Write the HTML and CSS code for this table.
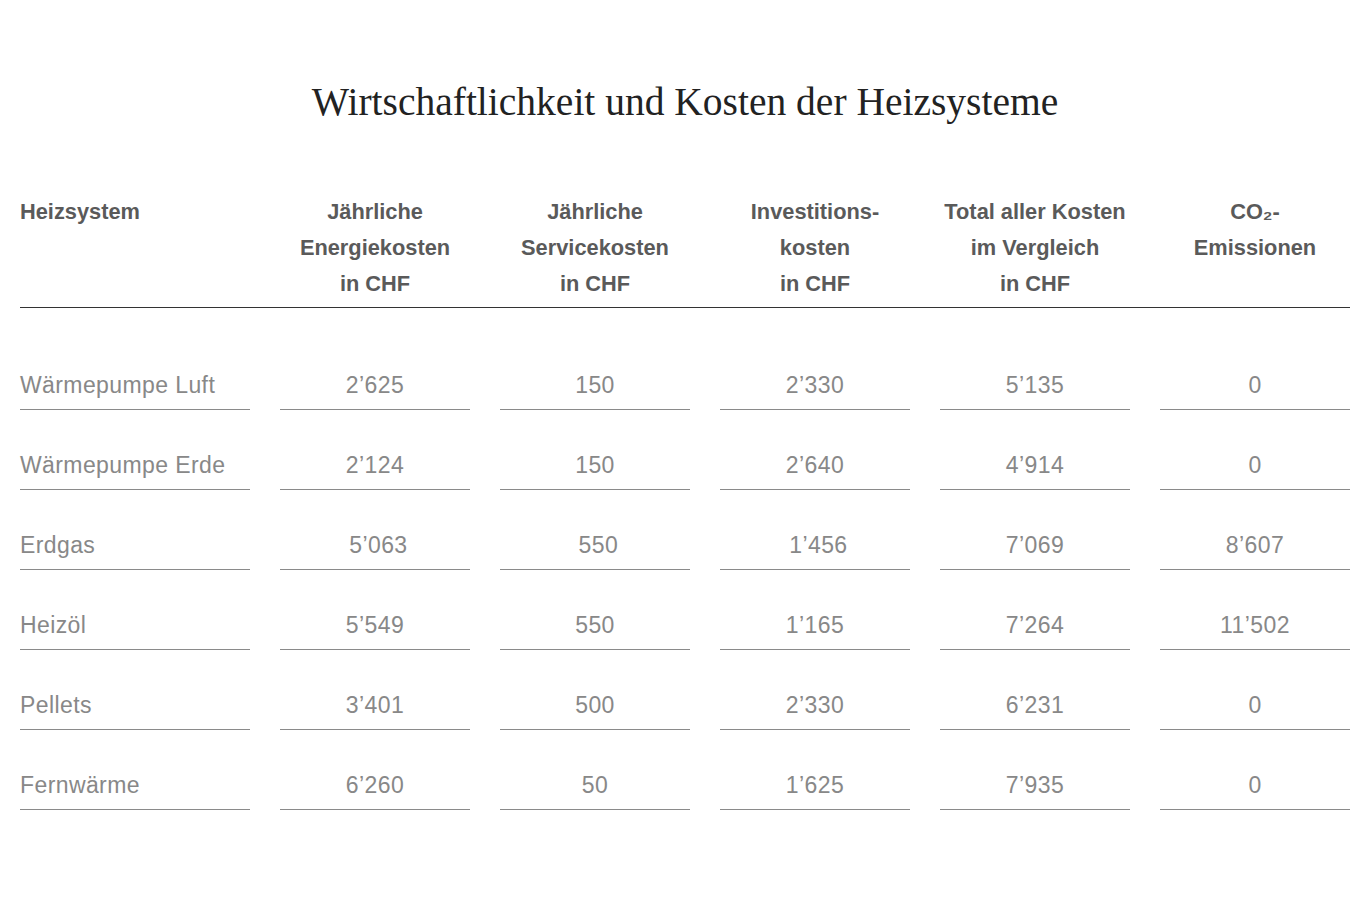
FILE: index.html
```html
<!DOCTYPE html>
<html lang="de">
<head>
<meta charset="utf-8">
<title>Wirtschaftlichkeit und Kosten der Heizsysteme</title>
<link rel="stylesheet" href="styles.css">
</head>
<body>
<main class="page">
  <h1 class="title">Wirtschaftlichkeit und Kosten der Heizsysteme</h1>
  <div class="table">
    <div class="row head">
      <div class="cell first">Heizsystem</div>
      <div class="cell">Jährliche<br>Energiekosten<br>in&nbsp;CHF</div>
      <div class="cell">Jährliche<br>Servicekosten<br>in&nbsp;CHF</div>
      <div class="cell">Investitions-<br>kosten<br>in&nbsp;CHF</div>
      <div class="cell">Total aller Kosten<br>im Vergleich<br>in&nbsp;CHF</div>
      <div class="cell">CO₂-<br>Emissionen</div>
    </div>
    <div class="body">
      <div class="row">
        <div class="cell first">Wärmepumpe Luft</div>
        <div class="cell">2’625</div><div class="cell">150</div><div class="cell">2’330</div><div class="cell">5’135</div><div class="cell">0</div>
      </div>
      <div class="row">
        <div class="cell first">Wärmepumpe Erde</div>
        <div class="cell">2’124</div><div class="cell">150</div><div class="cell">2’640</div><div class="cell">4’914</div><div class="cell">0</div>
      </div>
      <div class="row">
        <div class="cell first">Erdgas</div>
        <div class="cell">&nbsp;5’063</div><div class="cell">&nbsp;550</div><div class="cell">&nbsp;1’456</div><div class="cell">7’069</div><div class="cell">8’607</div>
      </div>
      <div class="row">
        <div class="cell first">Heizöl</div>
        <div class="cell">5’549</div><div class="cell">550</div><div class="cell">1’165</div><div class="cell">7’264</div><div class="cell">11’502</div>
      </div>
      <div class="row">
        <div class="cell first">Pellets</div>
        <div class="cell">3’401</div><div class="cell">500</div><div class="cell">2’330</div><div class="cell">6’231</div><div class="cell">0</div>
      </div>
      <div class="row">
        <div class="cell first">Fernwärme</div>
        <div class="cell">6’260</div><div class="cell">50</div><div class="cell">1’625</div><div class="cell">7’935</div><div class="cell">0</div>
      </div>
    </div>
  </div>
</main>
</body>
</html>
```
FILE: styles.css
```css
* { box-sizing: border-box; }
html, body { margin: 0; padding: 0; background: #fff; }
body { font-family: "Liberation Sans", Arial, sans-serif; }
.page { padding: 78px 20px 0 20px; }
.title {
  margin: 0 0 67px 0;
  text-align: center;
  font-family: "Liberation Serif", "Times New Roman", serif;
  font-weight: 400;
  font-size: 39.5px;
  line-height: 48px;
  color: #222;
}
.table { width: 1330px; }
.row {
  display: grid;
  grid-template-columns: 230px repeat(5, 190px);
  column-gap: 30px;
}
.head {
  border-bottom: 1px solid #333;
  padding-bottom: 6px;
}
.head .cell {
  font-weight: 700;
  font-size: 21.8px;
  line-height: 36px;
  padding-top: 1px;
  margin-bottom: -1px;
  color: #5a5a5a;
  text-align: center;
}
.head .cell.first { text-align: left; }
.body { padding-top: 22px; }
.body .row .cell {
  font-size: 23px;
  letter-spacing: 0.4px;
  line-height: 36px;
  color: #888;
  text-align: center;
  padding-top: 37px;
  padding-bottom: 6px;
  border-bottom: 1px solid #8a8a8a;
}
.body .row .cell.first { text-align: left; }
```
